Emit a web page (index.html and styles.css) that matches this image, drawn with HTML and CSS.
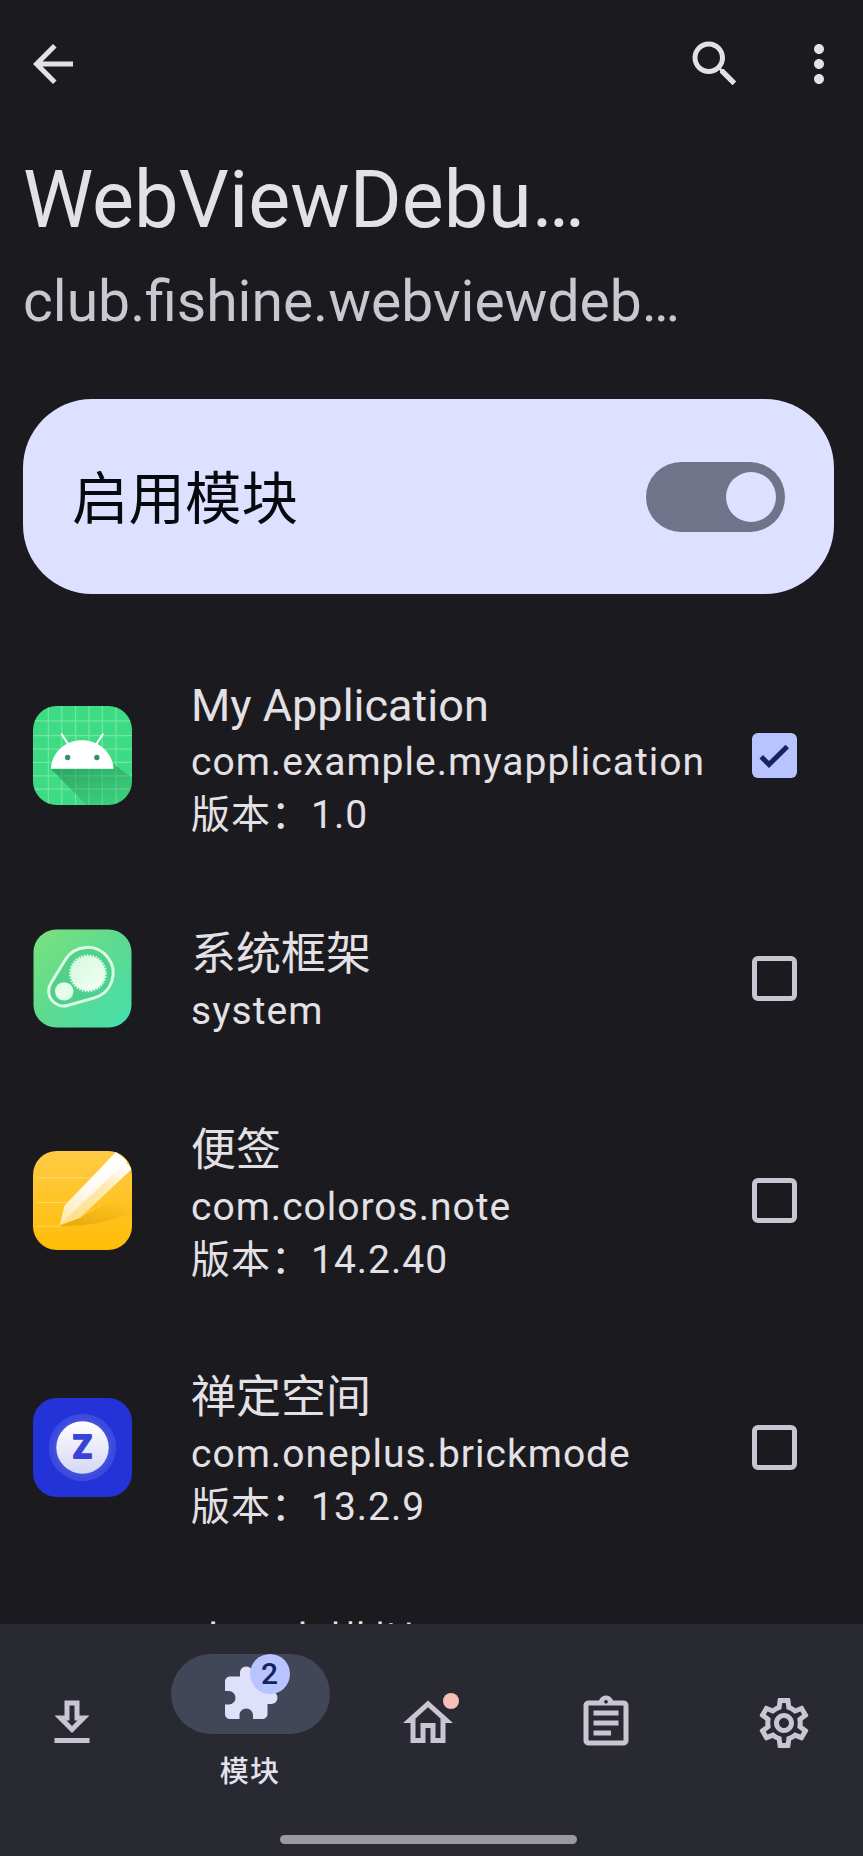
FILE: index.html
```html
<!DOCTYPE html>
<html lang="zh-CN">
<head>
  <meta charset="UTF-8" />
  <meta name="viewport" content="width=device-width, initial-scale=1.0" />
  <title>WebViewDebug</title>
  <link rel="stylesheet" href="styles.css">
</head>
<body>
  <div class="screen">
    <header class="toolbar">
      <svg class="icon" viewBox="0 0 24 24"><path d="M20 11H7.83l5.59-5.59L12 4l-8 8 8 8 1.41-1.41L7.83 13H20v-2z"/></svg>
      <div class="actions">
        <svg class="icon" viewBox="0 0 24 24"><path d="M15.5 14h-.79l-.28-.27C15.41 12.59 16 11.11 16 9.5 16 5.91 13.09 3 9.5 3S3 5.91 3 9.5 5.91 16 9.5 16c1.61 0 3.09-.59 4.23-1.57l.27.28v.79l5 4.99L20.49 19l-4.99-5zm-6 0C7.01 14 5 11.99 5 9.5S7.01 5 9.5 5 14 7.01 14 9.5 11.99 14 9.5 14z"/></svg>
        <svg class="icon" viewBox="0 0 24 24"><path d="M12 8c1.1 0 2-.9 2-2s-.9-2-2-2-2 .9-2 2 .9 2 2 2zm0 2c-1.1 0-2 .9-2 2s.9 2 2 2 2-.9 2-2-.9-2-2-2zm0 6c-1.1 0-2 .9-2 2s.9 2 2 2 2-.9 2-2-.9-2-2-2z"/></svg>
      </div>
    </header>

    <h1 class="title">WebViewDebu…</h1>
    <p class="subtitle">club.fishine.webviewdeb…</p>

    <div class="master-switch">
      <span class="switch-label">启用模块</span>
      <div class="switch"><div class="thumb"></div></div>
    </div>

    <main class="app-list">
      <div class="app">
        <svg class="app-icon" viewBox="0 0 100 100">
          <defs>
            <linearGradient id="shade" x1="0" y1="0" x2="0.7" y2="1">
              <stop offset="0" stop-color="#1d7a4a" stop-opacity=".6"/>
              <stop offset="1" stop-color="#1d7a4a" stop-opacity=".12"/>
            </linearGradient>
            <clipPath id="tile"><rect width="100" height="100" rx="24"/></clipPath>
          </defs>
          <g clip-path="url(#tile)">
            <rect width="100" height="100" fill="#3ddc84"/>
            <path d="M15.5 0V100M29 0V100M43 0V100M56.5 0V100M70 0V100M84 0V100M0 15H100M0 30H100M0 43.5H100M0 57H100M0 70.5H100M0 84H100" stroke="#fff" stroke-opacity=".28" stroke-width="1.2"/>
            <path d="M18 63.5H81L80 58 100 72V100H54z" fill="url(#shade)"/>
          </g>
          <path d="M18 63.5C19 47 32 34.5 49.5 34.5S80 47 81.5 63.5z" fill="#fff"/>
          <path d="M29 28.5l6.5 10M70.5 28.5l-6.5 10" stroke="#fff" stroke-width="2" stroke-linecap="round"/>
          <circle cx="35" cy="52" r="2.7" fill="#2f8f68"/>
          <circle cx="64.5" cy="52" r="2.7" fill="#2f8f68"/>
        </svg>
        <div class="info">
          <div class="name">My Application</div>
          <div class="desc">com.example.myapplication</div>
          <div class="desc">版本：1.0</div>
        </div>
        <div class="checkbox checked">
          <svg viewBox="0 0 18 18"><path d="M3.7 9.5l3.1 3.1 7.3-7.2" fill="none" stroke="#15235f" stroke-width="2"/></svg>
        </div>
      </div>

      <div class="app short">
        <svg class="app-icon" viewBox="0 0 100 100">
          <defs>
            <linearGradient id="mint" x1="0" y1="0" x2="1" y2="1">
              <stop offset="0" stop-color="#7be27c"/>
              <stop offset=".5" stop-color="#5cda90"/>
              <stop offset="1" stop-color="#43e0ae"/>
            </linearGradient>
            <linearGradient id="pale" x1="0" y1="0" x2="1" y2="1">
              <stop offset="0" stop-color="#d3f8dc"/>
              <stop offset="1" stop-color="#f4fff8"/>
            </linearGradient>
          </defs>
          <rect x=".5" y=".5" width="99" height="99" rx="23" fill="url(#mint)"/>
          <path d="M18.2 54.6L32.8 30.9A26 26 0 1 1 61.9 69.6L35.5 77A15 15 0 0 1 18.2 54.6z" fill="#3fc488" fill-opacity=".45" stroke="#dcfbe4" stroke-width="3"/>
          <circle cx="55.5" cy="44.8" r="17.7" fill="url(#pale)"/>
          <circle cx="55.5" cy="44.8" r="18.2" fill="none" stroke="#dffbe8" stroke-width="2" stroke-dasharray="1.5 1.5"/>
          <circle cx="31.5" cy="63" r="9.3" fill="#e4fcea"/>
        </svg>
        <div class="info">
          <div class="name">系统框架</div>
          <div class="desc">system</div>
        </div>
        <div class="checkbox"></div>
      </div>

      <div class="app">
        <svg class="app-icon" viewBox="0 0 100 100">
          <defs>
            <linearGradient id="amber" x1="0" y1="0" x2="0" y2="1">
              <stop offset="0" stop-color="#ffcb45"/>
              <stop offset="1" stop-color="#ffbc07"/>
            </linearGradient>
            <linearGradient id="pencil" gradientUnits="userSpaceOnUse" x1="86" y1="10" x2="30" y2="72">
              <stop offset="0" stop-color="#fff"/>
              <stop offset=".5" stop-color="#fffaf0"/>
              <stop offset="1" stop-color="#ffe9ac"/>
            </linearGradient>
            <linearGradient id="side" gradientUnits="userSpaceOnUse" x1="95" y1="15" x2="38" y2="70">
              <stop offset="0" stop-color="#fff"/>
              <stop offset=".4" stop-color="#ffe9b0"/>
              <stop offset="1" stop-color="#ffdf8c"/>
            </linearGradient>
            <linearGradient id="cast" x1="0" y1="1" x2="1" y2="0">
              <stop offset="0" stop-color="#c98d00" stop-opacity=".5"/>
              <stop offset=".8" stop-color="#d99a00" stop-opacity="0"/>
            </linearGradient>
          </defs>
          <g clip-path="url(#tile)">
            <rect width="100" height="100" fill="url(#amber)"/>
            <path d="M4 27H62M4 52H38M4 76H28" stroke="#ffdf82" stroke-opacity=".7" stroke-width="1.2"/>
            <path d="M27 75.5L48 67.5 100 40V62C80 72 50 76 27 75.5z" fill="url(#cast)"/>
            <path d="M27 75L32 55 84 1 100 18 47.5 67.5z" fill="url(#side)"/>
            <path d="M27 75L32 55 84 1 95 10 40 62z" fill="url(#pencil)"/>
          </g>
        </svg>
        <div class="info">
          <div class="name">便签</div>
          <div class="desc">com.coloros.note</div>
          <div class="desc">版本：14.2.40</div>
        </div>
        <div class="checkbox"></div>
      </div>

      <div class="app">
        <svg class="app-icon" viewBox="0 0 100 100">
          <defs>
            <linearGradient id="ball" x1="0" y1="0" x2="0" y2="1">
              <stop offset="0" stop-color="#fff"/>
              <stop offset="1" stop-color="#d5d6f4"/>
            </linearGradient>
          </defs>
          <rect width="100" height="100" rx="24" fill="#2433d8"/>
          <circle cx="50" cy="50" r="34" fill="#3b49df"/>
          <circle cx="50" cy="50" r="29.5" fill="#4250dc"/>
          <circle cx="50" cy="50" r="26.5" fill="url(#ball)"/>
          <text class="zen" x="50" y="61" text-anchor="middle">Z</text>
        </svg>
        <div class="info">
          <div class="name">禅定空间</div>
          <div class="desc">com.oneplus.brickmode</div>
          <div class="desc">版本：13.2.9</div>
        </div>
        <div class="checkbox"></div>
      </div>

      <div class="app">
        <div class="app-icon"></div>
        <div class="info">
          <div class="name">电子卡模拟</div>
        </div>
      </div>
    </main>

    <nav class="bottom-nav">
      <div class="tabs">
        <div class="tab">
          <svg class="icon" viewBox="0 0 24 24"><path d="M13 5v6h1.17L12 13.17 9.83 11H11V5h2m2-2H9v6H5l7 7 7-7h-4V3zm4 15H5v2h14v-2z"/></svg>
        </div>
        <div class="tab active">
          <div class="pill">
            <svg class="icon" viewBox="0 0 24 24"><path d="M20.5 11H19V7c0-1.1-.9-2-2-2h-4V3.5C13 2.12 11.88 1 10.5 1S8 2.12 8 3.5V5H4c-1.1 0-1.99.9-1.99 2v3.8H3.5c1.49 0 2.7 1.21 2.7 2.7s-1.21 2.7-2.7 2.7H2V20c0 1.1.9 2 2 2h3.8v-1.5c0-1.49 1.21-2.7 2.7-2.7s2.7 1.21 2.7 2.7V22H17c1.1 0 2-.9 2-2v-4h1.5c1.38 0 2.5-1.12 2.5-2.5S21.88 11 20.5 11z"/></svg>
            <span class="badge">2</span>
          </div>
          <span class="label">模块</span>
        </div>
        <div class="tab">
          <svg class="icon" viewBox="0 0 24 24"><path d="M12 5.69l5 4.5V18h-2v-6H9v6H7v-7.81l5-4.5M12 3L2 12h3v8h6v-6h2v6h6v-8h3L12 3z"/></svg>
          <span class="dot"></span>
        </div>
        <div class="tab">
          <svg class="icon" viewBox="0 0 24 24"><path d="M7 15h7v2H7zm0-4h10v2H7zm0-4h10v2H7zm12-4h-4.18C14.4 1.84 13.3 1 12 1s-2.4.84-2.82 2H5c-1.1 0-2 .9-2 2v14c0 1.1.9 2 2 2h14c1.1 0 2-.9 2-2V5c0-1.1-.9-2-2-2zm-7-.25c.41 0 .75.34.75.75s-.34.75-.75.75-.75-.34-.75-.75.34-.75.75-.75zM19 19H5V5h14v14z"/></svg>
        </div>
        <div class="tab">
          <svg class="icon" viewBox="0 0 24 24"><path d="M19.43 12.98c.04-.32.07-.64.07-.98 0-.34-.03-.66-.07-.98l2.11-1.65c.19-.15.24-.42.12-.64l-2-3.46c-.09-.16-.26-.25-.44-.25-.06 0-.12.01-.17.03l-2.49 1c-.52-.4-1.08-.73-1.69-.98l-.38-2.65C14.46 2.18 14.25 2 14 2h-4c-.25 0-.46.18-.49.42l-.38 2.65c-.61.25-1.17.59-1.69.98l-2.49-1c-.06-.02-.12-.03-.18-.03-.17 0-.34.09-.43.25l-2 3.46c-.13.22-.07.49.12.64l2.11 1.65c-.04.32-.07.65-.07.98 0 .33.03.66.07.98l-2.11 1.65c-.19.15-.24.42-.12.64l2 3.46c.09.16.26.25.44.25.06 0 .12-.01.17-.03l2.49-1c.52.4 1.08.73 1.69.98l.38 2.65c.03.24.24.42.49.42h4c.25 0 .46-.18.49-.42l.38-2.65c.61-.25 1.17-.59 1.69-.98l2.49 1c.06.02.12.03.18.03.17 0 .34-.09.43-.25l2-3.46c.12-.22.07-.49-.12-.64l-2.11-1.65zm-1.98-1.71c.04.31.05.52.05.73 0 .21-.02.43-.05.73l-.14 1.13.89.7 1.08.84-.7 1.21-1.27-.51-1.04-.42-.9.68c-.43.32-.84.56-1.25.73l-1.06.43-.16 1.13-.2 1.35h-1.4l-.19-1.35-.16-1.13-1.06-.43c-.43-.18-.83-.41-1.23-.71l-.91-.7-1.06.43-1.27.51-.7-1.21 1.08-.84.89-.7-.14-1.13c-.03-.31-.05-.54-.05-.74s.02-.43.05-.73l.14-1.13-.89-.7-1.08-.84.7-1.21 1.27.51 1.04.42.9-.68c.43-.32.84-.56 1.25-.73l1.06-.43.16-1.13.2-1.35h1.39l.19 1.35.16 1.13 1.06.43c.43.18.83.41 1.23.71l.91.7 1.06-.43 1.27-.51.7 1.21-1.07.85-.89.7.14 1.13zM12 8c-2.21 0-4 1.79-4 4s1.79 4 4 4 4-1.79 4-4-1.79-4-4-4zm0 6c-1.1 0-2-.9-2-2s.9-2 2-2 2 .9 2 2-.9 2-2 2z"/></svg>
        </div>
      </div>
      <div class="gesture-bar"></div>
    </nav>
  </div>
</body>
</html>
```

FILE: styles.css
```css
* {
  box-sizing: border-box;
}

body {
  margin: 0;
  background: #1b1b1f;
  color: #e4e1e6;
  font-family: Roboto, "Noto Sans CJK SC", sans-serif;
}

.screen {
  display: flex;
  flex-direction: column;
  width: 863px;
  height: 1856px;
  overflow: hidden;
}

.icon {
  display: block;
  flex-shrink: 0;
  width: 60px;
  height: 60px;
  fill: currentColor;
}

.toolbar {
  display: flex;
  justify-content: space-between;
  padding: 34px 14px 0 23px;
}

.actions {
  display: flex;
  gap: 44px;
}

.title {
  margin: 54px 0 0;
  padding-left: 23px;
  font-size: 79.2px;
  font-weight: 400;
  line-height: 104px;
}

.subtitle {
  margin: 15px 0 0;
  padding-left: 23px;
  font-size: 57px;
  line-height: 70px;
  color: #c9c7d0;
}

.master-switch {
  display: flex;
  align-items: center;
  justify-content: space-between;
  flex-shrink: 0;
  height: 195px;
  margin: 62px 29px 38px 23px;
  padding: 0 49px;
  border-radius: 69px;
  background: #dde1ff;
  color: #08090e;
  font-size: 56.5px;
}

.switch-label {
  padding-bottom: 5px;
}

.switch {
  display: flex;
  align-items: center;
  justify-content: flex-end;
  width: 139px;
  height: 70px;
  padding-right: 9px;
  border-radius: 35px;
  background: #6f748b;
}

.thumb {
  width: 50px;
  height: 50px;
  border-radius: 50%;
  background: #dde1ff;
}

.app-list {
  flex: 1;
  min-height: 0;
  overflow: hidden;
}

.app {
  display: flex;
  align-items: center;
  height: 247px;
  padding: 0 66px 0 33px;
}

.app.short {
  height: 198px;
}

.app-icon {
  flex-shrink: 0;
  width: 99px;
  height: 99px;
}

.info {
  flex: 1;
  align-self: flex-start;
  padding: 44px 0 0 59px;
  white-space: nowrap;
}

.short .info {
  padding-top: 46px;
}

.name {
  font-size: 45px;
  line-height: 60px;
}

.desc {
  font-size: 39px;
  line-height: 53px;
  letter-spacing: 1px;
}

.checkbox {
  flex-shrink: 0;
  width: 45px;
  height: 45px;
  border: 5px solid #c8c5d0;
  border-radius: 6px;
}

.checkbox.checked {
  border: none;
  background: #b8c4ff;
}

.checkbox svg {
  display: block;
}

.zen {
  font-family: Inter, sans-serif;
  font-size: 31px;
  font-weight: 700;
  fill: #3944d6;
  stroke: #3944d6;
  stroke-width: 1.8px;
  stroke-linejoin: round;
}

.bottom-nav {
  display: flex;
  flex-direction: column;
  align-items: center;
  flex-shrink: 0;
  height: 232px;
  background: #282931;
}

.tabs {
  display: flex;
  align-items: center;
  gap: 38px;
  width: 863px;
  height: 197px;
  padding-left: 2px;
}

.tab {
  position: relative;
  display: flex;
  flex-direction: column;
  align-items: center;
  width: 140px;
  color: #c8c6d3;
}

.active {
  color: #e4e1ec;
}

.pill {
  position: relative;
  display: flex;
  align-items: center;
  justify-content: center;
  flex-shrink: 0;
  width: 159px;
  height: 80px;
  border-radius: 40px;
  background: #424659;
  color: #dfe1fb;
}

.badge {
  position: absolute;
  top: 0;
  left: 79px;
  width: 40px;
  height: 40px;
  border-radius: 50%;
  background: #b8c4ff;
  color: #15235f;
  font-size: 30px;
  font-weight: 500;
  line-height: 40px;
  text-align: center;
}

.label {
  margin-top: 18px;
  font-size: 29px;
  font-weight: 500;
  line-height: 40px;
  letter-spacing: 1.2px;
}

.dot {
  position: absolute;
  top: 0;
  right: 39px;
  width: 16px;
  height: 16px;
  border-radius: 50%;
  background: #f8beb8;
}

.gesture-bar {
  width: 297px;
  height: 9px;
  margin: 14px 6px 0 0;
  border-radius: 5px;
  background: #9a99a1;
}
```
